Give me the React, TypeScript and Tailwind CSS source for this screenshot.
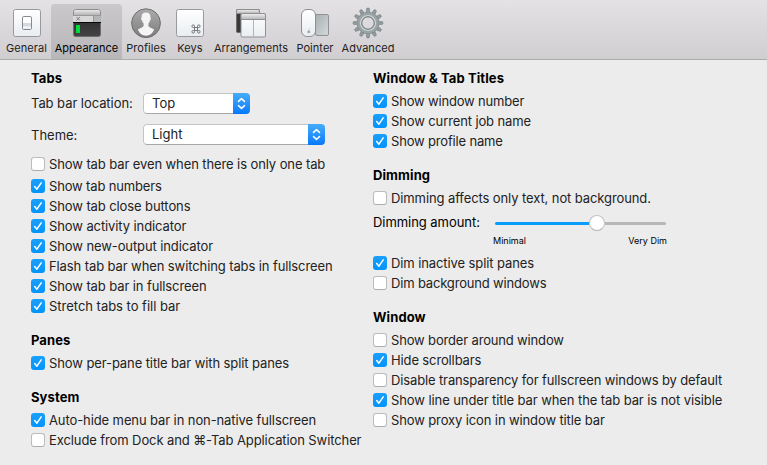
import React from "react";

function CheckBox({ checked }: { checked: boolean }) {
  if (!checked) {
    return (
      <span className="h-3.5 w-3.5 shrink-0 rounded-[3px] border border-[#bcbcbc] border-b-[#adadad] bg-white" />
    );
  }
  return (
    <span className="flex h-3.5 w-3.5 shrink-0 rounded-[3px] bg-linear-to-b from-[#1a9ffb] to-[#0094fb]">
      <svg viewBox="0 0 14 14" className="h-3.5 w-3.5" fill="none">
        <path d="M3.7 7.6 L5.9 10.2 L10.2 3.8" stroke="#fff" strokeWidth="1.5" strokeLinecap="round" strokeLinejoin="round" />
      </svg>
    </span>
  );
}

function Option({
  on = false,
  className = "",
  tracking = "tracking-[-0.1px]",
  children,
}: {
  on?: boolean;
  className?: string;
  tracking?: string;
  children: React.ReactNode;
}) {
  return (
    <label className={"flex h-5 items-center gap-1 whitespace-nowrap " + className}>
      <CheckBox checked={on} />
      <span className={"pt-0.5 " + tracking}>{children}</span>
    </label>
  );
}

function Heading({ className = "", children }: { className?: string; children: React.ReactNode }) {
  return (
    <h2 className={"flex h-5 items-center whitespace-nowrap pt-0.5 font-bold tracking-[0.1px] text-black " + className}>
      {children}
    </h2>
  );
}

function Select({ className, value }: { className: string; value: string }) {
  return (
    <div className={"flex h-[21px] overflow-hidden rounded-[4px] " + className}>
      <div className="flex flex-1 items-center rounded-l-[4px] border border-r-0 border-[#c4c4c4] border-b-[#a8a8a8] bg-white pl-2">
        {value}
      </div>
      <div className="w-[17px] bg-linear-to-b from-[#45acf8] to-[#0479fb]">
        <svg viewBox="0 0 17 21" className="h-[21px] w-[17px]" fill="none">
          <path d="M5.5 8.4 L8.5 5.6 L11.5 8.4 M5.5 12.6 L8.5 15.4 L11.5 12.6" stroke="#fff" strokeWidth="1.5" strokeLinecap="round" strokeLinejoin="round" />
        </svg>
      </div>
    </div>
  );
}

function Tool({ label, className, children }: { label: string; className: string; children: React.ReactNode }) {
  return (
    <div className={"flex shrink-0 flex-col items-center whitespace-nowrap pt-[3px] text-[11px] text-[#222] " + className}>
      <svg viewBox="0 0 32 32" className="h-8 w-8" fill="none">
        {children}
      </svg>
      <span className="mt-px leading-[16px] tracking-[0.04px]">{label}</span>
    </div>
  );
}

const teeth = [0, 30, 60, 90, 120, 150, 180, 210, 240, 270, 300, 330];

export default function App() {
  return (
    <div className="h-[465px] w-[767px] overflow-hidden bg-[#ececec] font-[Inter,sans-serif] text-[13px] text-[#222]">
      <header className="flex h-[60px] border-b border-[#acacac] bg-linear-to-b from-[#e5e2e5] to-[#d1ced1] pl-0.5 pt-1">
        <Tool label="General" className="w-[49px]">
          <defs>
            <linearGradient id="plate" x1="0" y1="0" x2="0" y2="1">
              <stop stopColor="#fff" /><stop offset="1" stopColor="#e9edf0" />
            </linearGradient>
            <linearGradient id="bar" x1="0" y1="0" x2="0" y2="1">
              <stop stopColor="#f2f2f2" /><stop offset="1" stopColor="#b4b4b4" />
            </linearGradient>
            <linearGradient id="dark" x1="0" y1="0" x2="0" y2="1">
              <stop stopColor="#222" /><stop offset="1" stopColor="#444" />
            </linearGradient>
            <linearGradient id="disc" x1="0" y1="0" x2="0" y2="1">
              <stop stopColor="#ababab" /><stop offset="1" stopColor="#7c7c7c" />
            </linearGradient>
            <linearGradient id="pad" x1="0" y1="0" x2="1" y2="1">
              <stop stopColor="#a9afb0" /><stop offset="1" stopColor="#d5dbdc" />
            </linearGradient>
          </defs>
          <rect x="2.5" y="2.5" width="27" height="27" rx="2" fill="url(#plate)" stroke="#98999c" />
          <rect x="11.5" y="9.5" width="9" height="13" rx="1.3" fill="#fff" stroke="#86898d" />
          <path d="M12 16h8v5.4q0 .6-.6.6h-6.8q-.6 0-.6-.6z" fill="#d5dae0" />
          <path d="M12 20.5h8" stroke="#f7f9fa" strokeWidth="2" />
        </Tool>

        <Tool label="Appearance" className="w-[71px] rounded-t-[4px] bg-linear-to-b from-[#cbc8cb] to-[#b9b6b9] text-black">
          <rect x="2.5" y="2.5" width="27" height="27" rx="2" fill="url(#dark)" stroke="#6c6c6c" />
          <path d="M2 8V4q0-2 2-2h24q2 0 2 2v4z" fill="url(#bar)" />
          <path d="M2.5 8V4.500q0-2 2-2h23q2 0 2 2V8" stroke="#8d8d8d" />
          <rect x="2" y="8" width="28" height="7" fill="#d7d7d7" />
          <rect x="23" y="8" width="7" height="7" fill="#b4b5b6" />
          <path d="M2 8.500h28M22.500 8v7" stroke="#989898" />
          <path d="M5.500 10l3.500 3.500M9 10l-3.500 3.500" stroke="#767676" strokeWidth=".9" />
          <path d="M2 15.500h28" stroke="#050505" />
          <rect x="5" y="18" width="4" height="8" fill="#00dc3b" />
        </Tool>

        <Tool label="Profiles" className="w-[48px]">
          <circle cx="16" cy="16.200" r="14.400" fill="url(#disc)" stroke="#6f6f6f" strokeWidth="1" />
          <path d="M16 5.600c-3 0-4.700 1.900-4.500 5.100-.7.300-.3 2.300.6 2.700.3 1.400.8 2.300 1.500 3.100v2.600c-.8 1.700-3.200 1.800-5.700 3.500C9.300 26.400 12.300 28.800 16 28.800s6.700-2.400 8.100-6.200c-2.500-1.700-4.900-1.800-5.700-3.500v-2.600c.7-.8 1.200-1.700 1.500-3.100.9-.4 1.300-2.400.6-2.700.2-3.200-1.500-5.100-4.500-5.100z" fill="#f5f5f5" />
        </Tool>

        <Tool label="Keys" className="w-[40px]">
          <rect x="2.5" y="2.5" width="27" height="27" rx="2" fill="url(#plate)" stroke="#98999c" />
          <path d="M20.500 20.500h3v3h-3zM20.500 20.500h-1.300a1.300 1.300 0 1 1 1.300-1.300zM23.500 20.500v-1.300a1.300 1.300 0 1 1 1.300 1.300zM23.500 23.500h1.300a1.300 1.300 0 1 1-1.300 1.300zM20.500 23.500v1.300a1.300 1.300 0 1 1-1.300-1.300z" stroke="#75797b" strokeWidth="1" />
        </Tool>

        <Tool label="Arrangements" className="w-[82px]">
          <rect x="1.500" y="2.500" width="23" height="23" rx="1" fill="#3b3938" stroke="#6f6f6f" />
          <path d="M1.500 6.500V4q0-1.500 1.500-1.500h20q1.500 0 1.500 1.500v2.500z" fill="url(#bar)" stroke="#8d8d8d" />
          <rect x="6" y="6.500" width="24.500" height="23.500" rx="1" fill="url(#plate)" stroke="#8d9093" />
          <path d="M6 12.500V8q0-1.500 1.500-1.500H29q1.500 0 1.500 1.500v4.500z" fill="url(#bar)" stroke="#909090" />
          <path d="M18.500 13v16.500" stroke="#b2b5b8" />
        </Tool>

        <Tool label="Pointer" className="w-[46px]">
          <rect x="16.500" y="7.500" width="13" height="21" rx="1.500" fill="url(#pad)" stroke="#8f9393" />
          <rect x="2.500" y="2.500" width="14" height="27" rx="5.500" fill="url(#plate)" stroke="#8d8f90" />
          <circle cx="9.800" cy="24.700" r="1.500" fill="#a5a9ac" />
          <path d="M10 22.600l.8-1" stroke="#a5a9ac" strokeWidth=".8" />
        </Tool>

        <Tool label="Advanced" className="w-[60px]">
          <g fill="#929b9d" stroke="#747d80" strokeWidth=".6">
            {teeth.map((a) => (
              <path key={a} d="M14.200 6l.5-4.400q0-.5.500-.5h1.600q.5 0 .5.500l.5 4.400z" transform={`rotate(${a} 16 16)`} />
            ))}
          </g>
          <circle cx="16" cy="16" r="8.600" stroke="#747d80" strokeWidth="5" />
          <circle cx="16" cy="16" r="8.800" stroke="#9aa3a5" strokeWidth="3.900" />
          <circle cx="16" cy="16" r="7.400" stroke="#cdd3d4" strokeWidth="1.400" />
          <circle cx="16" cy="16" r="6.200" stroke="#7b8486" strokeWidth="1" />
        </Tool>
      </header>

      <main className="flex pl-[31px] pt-2">
        <section className="w-[342px]">
          <Heading>Tabs</Heading>
          <div className="mt-[5px] flex h-[21px] items-center">
            <span className="w-28 whitespace-nowrap tracking-[-0.06px]">Tab bar location:</span>
            <Select className="w-[107px]" value="Top" />
          </div>
          <div className="mt-2.5 flex h-[21px] items-center">
            <span className="w-28 pt-0.5">Theme:</span>
            <Select className="w-[182px]" value="Light" />
          </div>
          <Option className="mt-[9px]">Show tab bar even when there is only one tab</Option>
          <Option on className="mt-0.5" tracking="tracking-[-0.16px]">Show tab numbers</Option>
          <Option on>Show tab close buttons</Option>
          <Option on>Show activity indicator</Option>
          <Option on>Show new-output indicator</Option>
          <Option on>Flash tab bar when switching tabs in fullscreen</Option>
          <Option on>Show tab bar in fullscreen</Option>
          <Option on tracking="tracking-[-0.02px]">Stretch tabs to fill bar</Option>
          <Heading className="mt-3.5">Panes</Heading>
          <Option on className="mt-[3px]">Show per-pane title bar with split panes</Option>
          <Heading className="mt-3.5">System</Heading>
          <Option on className="mt-[3px]">Auto-hide menu bar in non-native fullscreen</Option>
          <Option>Exclude from Dock and ⌘-Tab Application Switcher</Option>
        </section>

        <section className="w-[360px]">
          <Heading>Window &amp; Tab Titles</Heading>
          <Option on className="mt-[3px]" tracking="tracking-[-0.18px]">Show window number</Option>
          <Option on tracking="tracking-[-0.12px]">Show current job name</Option>
          <Option on tracking="tracking-[-0.17px]">Show profile name</Option>
          <Heading className="mt-3.5">Dimming</Heading>
          <Option className="mt-[3px]">Dimming affects only text, not background.</Option>
          <div className="mt-[5px] flex h-5 items-center">
            <span className="w-[122px] whitespace-nowrap tracking-[-0.05px] text-black">Dimming amount:</span>
            <div className="flex w-[171px] items-center">
              <span className="h-[3px] w-[94px] rounded-l-full bg-[#0a9cfb]" />
              <span className="h-4 w-4 shrink-0 rounded-full border border-[#c3c3c3] border-b-[#b0b0b0] bg-white" />
              <span className="h-[3px] flex-1 rounded-r-full bg-[#b7b7b7]" />
            </div>
          </div>
          <div className="ml-[120px] mt-[3px] flex h-[10px] w-[174px] items-center justify-between text-[9px] leading-[10px] text-black">
            <span>Minimal</span>
            <span>Very Dim</span>
          </div>
          <Option on className="mt-[7px]">Dim inactive split panes</Option>
          <Option tracking="tracking-[-0.17px]">Dim background windows</Option>
          <Heading className="mt-3.5">Window</Heading>
          <Option className="mt-[3px]" tracking="tracking-[-0.16px]">Show border around window</Option>
          <Option on tracking="tracking-[-0.13px]">Hide scrollbars</Option>
          <Option tracking="tracking-[-0.13px]">Disable transparency for fullscreen windows by default</Option>
          <Option on tracking="tracking-[-0.09px]">Show line under title bar when the tab bar is not visible</Option>
          <Option tracking="tracking-[-0.12px]">Show proxy icon in window title bar</Option>
        </section>
      </main>
    </div>
  );
}
